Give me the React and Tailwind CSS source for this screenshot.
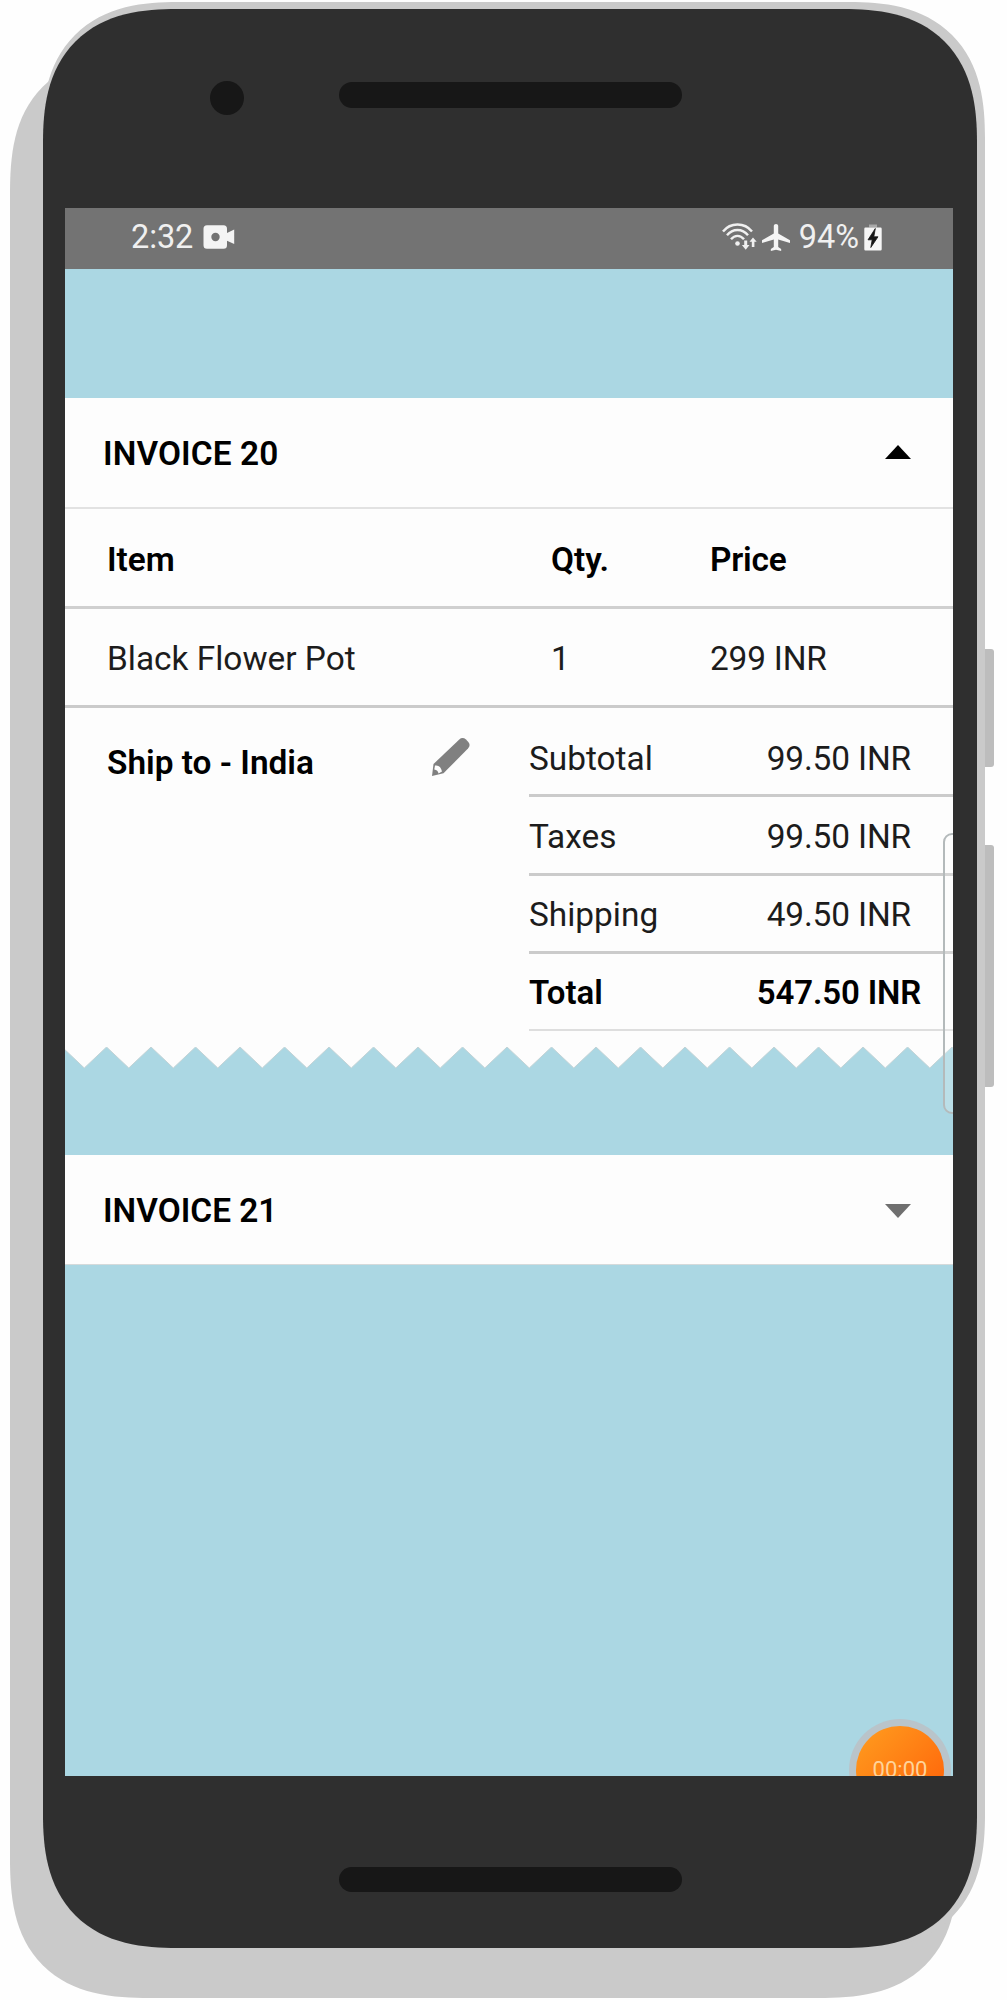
import React from "react";

const ZIG_PERIOD = 44.5;

function RecordIcon() {
  return (
    <svg className="ml-[10px] h-[24px] w-[32px]" viewBox="0 0 32 24" fill="#f4f4f4">
      <path
        fillRule="evenodd"
        d="M4 0.3h16.5a3.5 3.5 0 0 1 3.5 3.5v4.2l7.2-3.4v14.4L24 15.8v4.4a3.5 3.5 0 0 1-3.5 3.5H4a3.5 3.5 0 0 1-3.5-3.5V3.8a3.5 3.5 0 0 1 3.5-3.5zM12.5 7.8a4.2 4.2 0 1 0 0 8.4a4.2 4.2 0 0 0 0-8.4z"
      />
    </svg>
  );
}

function WifiIcon() {
  return (
    <svg className="h-[28px] w-[36px]" viewBox="0 0 36 28" fill="none" stroke="#f0f0f0" strokeWidth="2.4">
      <path d="M1 8.5C8.5-0.8 22.5-0.8 30 8.5" />
      <path d="M5 12.3C10.7 5.3 20.3 5.3 26 12.3" />
      <path d="M9 16.3C12.8 11.7 18.2 11.7 22 16.3" />
      <circle cx="15.5" cy="20.5" r="2.3" fill="#f0f0f0" stroke="none" />
      <path d="M22.2 17.5h3v4.5h2.3l-3.8 4.8l-3.8-4.8h2.300z" fill="#f0f0f0" stroke="none" />
      <path d="M31 14.5l3.7 4.3h-2.300v5.2h-2.600v-5.2h-2.300z" fill="#f0f0f0" stroke="none" />
    </svg>
  );
}

function PlaneIcon() {
  return (
    <svg className="ml-[4px] h-[27px] w-[28px]" viewBox="2 2 19 20" preserveAspectRatio="none" fill="#f4f4f4">
      <path d="M21 16v-2l-8-5V3.5c0-.83-.67-1.5-1.5-1.5S10 2.67 10 3.5V9l-8 5v2l8-2.5V19l-2 1.5V22l3.5-1 3.5 1v-1.5L13 19v-5.5l8 2.5z" />
    </svg>
  );
}

function BatteryIcon() {
  return (
    <svg className="h-[27px] w-[18px]" viewBox="0 0 18 27">
      <path d="M5 0.5h8v3h-8z" fill="#a9a9a9" />
      <path d="M1.5 3.500h15a1.2 1.2 0 0 1 1.2 1.2v20.6a1.2 1.2 0 0 1-1.2 1.2h-15a1.2 1.2 0 0 1-1.2-1.2v-20.6a1.2 1.2 0 0 1 1.2-1.2z" fill="#f6f6f6" />
      <path d="M11.3 4.5L4 15.8h4.2l-1.4 7.7L14 12.8H9.8z" fill="#161616" stroke="#161616" strokeWidth="0.8" />
    </svg>
  );
}

function PencilIcon() {
  return (
    <svg className="h-[40px] w-[40px]" viewBox="0 0 40 40">
      <path d="M1 39L2.5 27L28.3 2.5Q31.5-0.3 35 2.6L37.3 4.9Q40 8.3 37 11.5L12.5 36.3Z" fill="#808080" />
      <path d="M4 28.5Q9.5 27.5 11 34.5L7.5 36.5Q7 33 3.3 32.5Z" fill="#fdfdfd" />
    </svg>
  );
}

function Caret({ up }) {
  return (
    <svg className={up ? "-mt-[3px] h-[14px] w-[26px]" : "h-[14px] w-[26px]"} viewBox="0 0 26 14">
      {up ? <path d="M0 14L13 0L26 14Z" fill="#000" /> : <path d="M0 0H26L13 14Z" fill="#6f6f6f" />}
    </svg>
  );
}

function InvoiceHeader({ title, open, tracking }) {
  return (
    <div className="flex h-[109px] items-center justify-between bg-[#fdfdfd] pl-[38px] pr-[42px] pt-[2px]">
      <h2 className={"font-semibold " + tracking}>{title}</h2>
      <Caret up={open} />
    </div>
  );
}

function ItemRow({ cells, className }) {
  return (
    <div className={"flex items-center pl-[42px] " + className}>
      <span className="w-[444px]">{cells[0]}</span>
      <span className="w-[159px]">{cells[1]}</span>
      <span className="tracking-[-0.2px]">{cells[2]}</span>
    </div>
  );
}

function SummaryRow({ label, value, className }) {
  return (
    <div className={"flex items-center justify-between " + className}>
      <span>{label}</span>
      <span className="tracking-[-0.15px]">{value}</span>
    </div>
  );
}

function ZigZag() {
  const points = ["0,0"];
  for (let i = -1; i < 21; i++) {
    const trough = 19.3 + i * ZIG_PERIOD;
    points.push(`${trough},22`, `${trough + ZIG_PERIOD / 2},1`);
  }
  points.push("940,0");
  return (
    <svg className="block h-[23px] w-full" viewBox="0 0 888 23">
      <polygon points={points.join(" ")} fill="#fdfdfd" stroke="#c3d3d6" strokeWidth="1" />
      <rect x="-2" y="-1" width="900" height="2" fill="#fdfdfd" />
    </svg>
  );
}

function StatusBar() {
  return (
    <div className="flex h-[61px] items-center justify-between bg-[#737373] pb-[3px] pl-[66px] pr-[71px] text-[32.5px] text-[#f0f0f0]">
      <div className="flex items-center">
        <span className="tracking-[-0.1px]">2:32</span>
        <RecordIcon />
      </div>
      <div className="flex items-center">
        <WifiIcon />
        <PlaneIcon />
        <span className="ml-[9px] mr-[5px]">94%</span>
        <BatteryIcon />
      </div>
    </div>
  );
}

function Screen() {
  return (
    <div className="relative h-[1568px] w-[888px] overflow-hidden bg-[#abd7e3] text-[33.4px] leading-none text-black">
      <StatusBar />
      <section className="pt-[129px]">
        <InvoiceHeader title="INVOICE 20" open tracking="tracking-[0.1px]" />
        <div className="bg-[#fdfdfd]">
          <ItemRow cells={["Item", "Qty.", "Price"]} className="h-[102px] border-b-[3px] border-t-2 border-b-[#d0d0d0] border-t-[#e2e2e2] pt-[4px] font-semibold" />
          <ItemRow cells={["Black Flower Pot", "1", "299 INR"]} className="h-[99px] border-b-[3px] border-[#cbcbcb] pt-[3px] text-[#1c1c1c]" />
          <div className="flex h-[338px]">
            <div className="flex w-[464px] items-start justify-between pl-[42px] pr-[60px]">
              <span className="pt-[38px] font-semibold">Ship to - India</span>
              <span className="-mr-[2px] pt-[29px]">
                <PencilIcon />
              </span>
            </div>
            <div className="flex-1 text-[#1c1c1c]">
              <SummaryRow label="Subtotal" value="99.50 INR" className="h-[89px] border-b-[3px] border-[#cbcbcb] pr-[42px] pt-[15px]" />
              <SummaryRow label="Taxes" value="99.50 INR" className="h-[79px] border-b-[3px] border-[#cbcbcb] pr-[42px] pt-[3px]" />
              <SummaryRow label="Shipping" value="49.50 INR" className="h-[78px] border-b-[3px] border-[#cbcbcb] pr-[42px] pt-[3px]" />
              <SummaryRow label="Total" value="547.50 INR" className="h-[77px] border-b-2 border-[#dedede] pr-[32px] pt-[2px] text-[33px] font-semibold text-black" />
            </div>
          </div>
        </div>
        <ZigZag />
      </section>
      <section className="pt-[86px]">
        <InvoiceHeader title="INVOICE 21" tracking="tracking-normal" />
        <div className="h-px bg-[#d5dadb]" />
      </section>

      {/* edge panel handle */}
      <div className="absolute -right-[12px] top-[625px] h-[281px] w-[22px] rounded-[9px] border-2 border-[#b4babb] bg-white/20" />

      {/* floating recorder bubble */}
      <div className="absolute left-[784px] top-[1511px] flex size-[102px] items-center justify-center rounded-full bg-[#b9c4ca]">
        <div className="flex size-[88px] items-center justify-center rounded-full bg-linear-to-br from-[#ff9d1f] to-[#ff5a05]">
          <span className="text-[22px] text-[#ffd39a]">00:00</span>
        </div>
      </div>
    </div>
  );
}

export default function App() {
  return (
    <main className="relative h-[2000px] w-[1007px] overflow-hidden bg-[#fefefe] font-[Roboto,sans-serif]">
      {/* drop shadow, metal rim and side keys of the handset */}
      <div className="absolute left-[10px] top-[54px] h-[1944px] w-[948px] rounded-[118px] bg-[#cacaca] supports-[corner-shape:squircle]:rounded-[140px] [corner-shape:superellipse(1.38)]" />
      <div className="absolute left-[42px] top-[2px] h-[1948px] w-[943px] rounded-[110px] bg-[#cacaca] supports-[corner-shape:squircle]:rounded-[136px] [corner-shape:superellipse(1.32)]" />
      <div className="absolute left-[985px] top-[649px] h-[118px] w-[9px] rounded-r-[3px] bg-[#bdbdbd]" />
      <div className="absolute left-[985px] top-[845px] h-[242px] w-[9px] rounded-r-[3px] bg-[#bdbdbd]" />

      <div className="relative ml-[43px] mt-[9px] flex h-[1939px] w-[934px] flex-col bg-[#2f2f2f] pl-[22px] rounded-[108px] supports-[corner-shape:squircle]:rounded-[134px] [corner-shape:superellipse(1.32)]">
        <div className="flex h-[199px] items-start pl-[145px] pt-[72px]">
          <div className="size-[34px] rounded-full bg-[#171717]" />
          <div className="ml-[95px] mt-[1px] h-[26px] w-[343px] rounded-full bg-[#171717]" />
        </div>
        <Screen />
        <div className="ml-[274px] mt-[91px] h-[25px] w-[343px] rounded-full bg-[#171717]" />
      </div>
    </main>
  );
}
